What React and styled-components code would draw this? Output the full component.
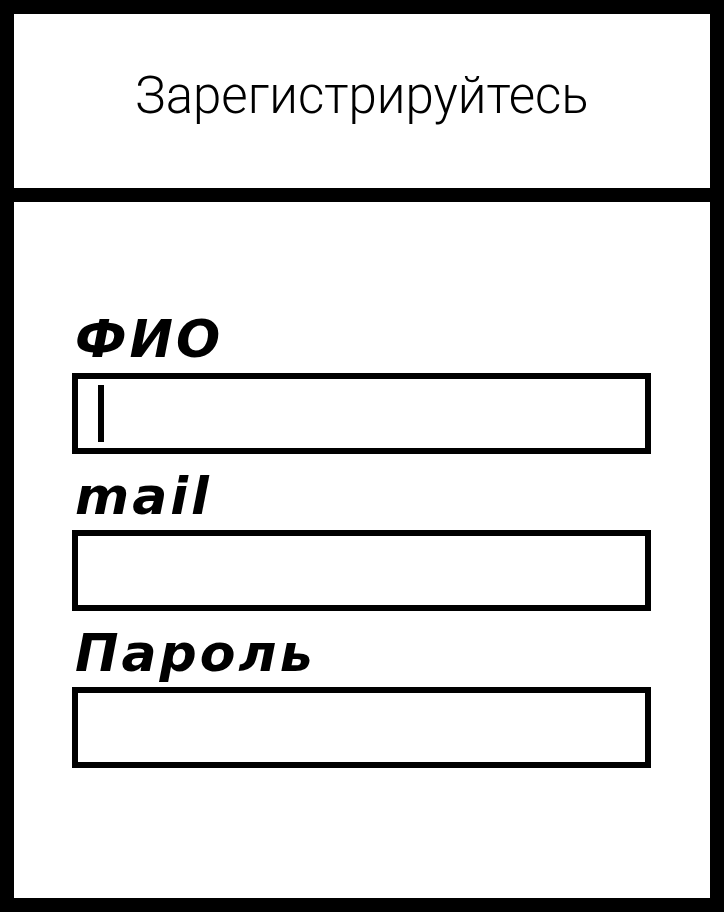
import { createGlobalStyle, styled } from 'styled-components';

const GlobalStyle = createGlobalStyle`
	html, body {
		margin: 0;
		padding: 0;
		background: #fff;
	}
	* {
		box-sizing: border-box;
	}
`;

const Frame = styled.div`
	display: flex;
	flex-direction: column;
	width: 724px;
	height: 912px;
	border: 14px solid #000;
	background: #fff;
`;

const Header = styled.header`
	display: flex;
	align-items: center;
	justify-content: center;
	height: 188px;
	padding-bottom: 12px;
	border-bottom: 14px solid #000;
`;

const Title = styled.h1`
	margin: 0;
	font-family: Roboto, 'Liberation Sans', sans-serif;
	font-size: 51px;
	font-weight: 300;
	line-height: 1;
	color: #000;
`;

const Form = styled.form`
	display: flex;
	flex-direction: column;
	padding: 103px 59px 0 58px;
`;

const Label = styled.label`
	display: block;
	margin-top: ${({ $first }) => ($first ? '0' : '8px')};
	padding-left: 3px;
	font-family: 'DejaVu Sans', 'Noto Sans', sans-serif;
	font-size: 52px;
	font-style: italic;
	font-weight: 700;
	line-height: 68px;
	letter-spacing: 3px;
	color: #000;
`;

const Field = styled.div`
	display: flex;
	align-items: center;
	height: 81px;
	padding: 0 20px;
	border: 6px solid #000;
	background: #fff;
`;

const Caret = styled.span`
	display: block;
	width: 6px;
	height: 57px;
	background: #000;
`;

const fields = [
	{ label: 'ФИО', active: true },
	{ label: 'mail' },
	{ label: 'Пароль' },
];

export default function App() {
	return (
		<>
			<GlobalStyle />
			<Frame>
				<Header>
					<Title>Зарегистрируйтесь</Title>
				</Header>
				<Form>
					{fields.map((f, i) => (
						<div key={f.label}>
							<Label $first={i === 0}>{f.label}</Label>
							<Field>{f.active && <Caret />}</Field>
						</div>
					))}
				</Form>
			</Frame>
		</>
	);
}
